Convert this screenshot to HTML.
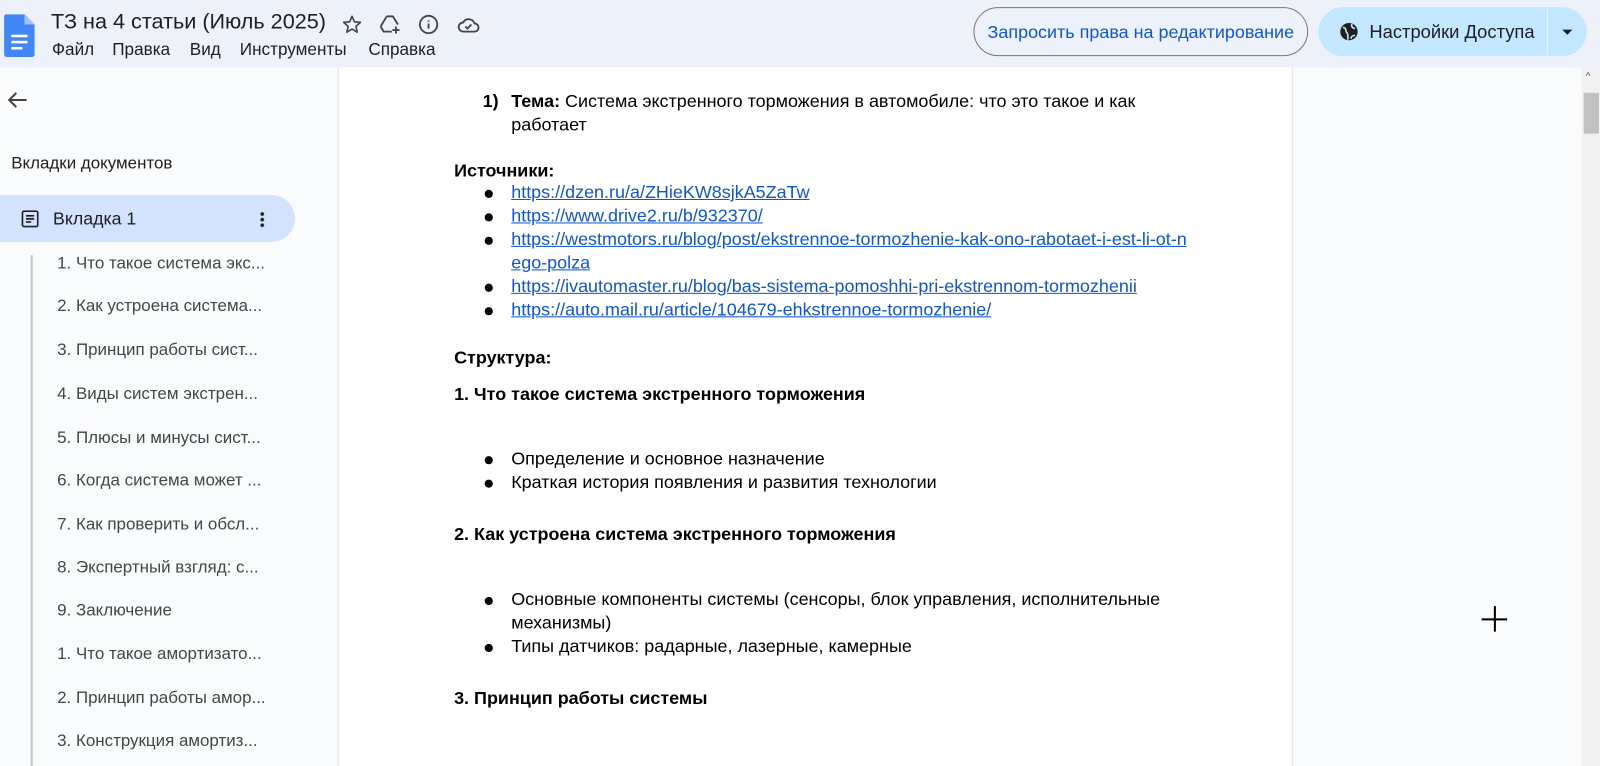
<!DOCTYPE html>
<html><head><meta charset="utf-8"><style>
*{margin:0;padding:0;box-sizing:border-box}
body{width:1600px;height:751px;overflow:hidden;background:#f9fbfd;font-family:"Liberation Sans",Arial,sans-serif;color:#000}
#w{position:absolute;left:0;top:0;width:1568px;height:736px;transform:scale(1.0204);transform-origin:0 0}
.a{position:absolute;white-space:nowrap}
#top{position:absolute;left:0;top:0;width:1568px;height:66px;background:#edf2fa}
.side{font-size:16.6px;color:#444746}
.doc{font-size:17.6px;line-height:23px}
.b{font-weight:bold}
.l{color:#1155cc;text-decoration:underline}
.dot{position:absolute;left:475px;width:8px;height:8px;border-radius:50%;background:#000}
.m{position:absolute;top:39px;font-size:16.8px;color:#1f1f1f}
</style></head><body><div id="w">
<div id="top"></div>
<svg class="a" style="left:4px;top:14px" width="30" height="42" viewBox="0 0 30 42"><path d="M2 0h18l10 10v29a3 3 0 0 1-3 3H3a3 3 0 0 1-3-3V3a3 3 0 0 1 2-3z" fill="#4285f4"/><path d="M20 0v10h10z" fill="#a1c2fa"/><rect x="7" y="20" width="16" height="2.5" fill="#fff"/><rect x="7" y="26" width="16" height="2.5" fill="#fff"/><rect x="7" y="32" width="11" height="2.5" fill="#fff"/></svg>
<div class="a" style="left:50px;top:10px;font-size:21.2px;color:#1f1f1f">ТЗ на 4 статьи (Июль 2025)</div>
<svg class="a" style="left:335px;top:14px" width="20" height="20" viewBox="0 0 20 20" fill="none" stroke="#444" stroke-width="1.6" stroke-linejoin="round"><path d="M10 2l2.4 5.4 5.8.5-4.4 3.9 1.3 5.7L10 14.5l-5.1 3 1.3-5.7L1.8 7.9l5.8-.5z"/></svg>
<svg class="a" style="left:372px;top:14px" width="22" height="20" viewBox="0 0 22 20" fill="none" stroke="#444" stroke-width="1.8" stroke-linejoin="round"><path d="M7 2h6l5 8M1 12L7 2M1 12l3 5h8"/><path d="M16 12v7M12.5 15.5h7"/></svg>
<svg class="a" style="left:410px;top:14px" width="20" height="20" viewBox="0 0 20 20" fill="none" stroke="#444" stroke-width="1.8"><circle cx="10" cy="10" r="8.5"/><path d="M10 9v5M10 6v1.2"/></svg>
<svg class="a" style="left:448px;top:16px" width="22" height="16" viewBox="0 0 22 16" fill="none" stroke="#444" stroke-width="1.8"><path d="M6 15h11a4 4 0 0 0 0-8 6 6 0 0 0-11-1 4.5 4.5 0 0 0 0 9z"/><path d="M8 10l2 2 4-4"/></svg>
<div class="m" style="left:51px">Файл</div>
<div class="m" style="left:110px">Правка</div>
<div class="m" style="left:186px">Вид</div>
<div class="m" style="left:235px">Инструменты</div>
<div class="m" style="left:361px">Справка</div>
<div class="a" style="left:954px;top:7px;width:328px;height:48px;border:1px solid #747775;border-radius:24px;color:#0b57d0;font-size:17.6px;text-align:center;line-height:46px">Запросить права на редактирование</div>
<div class="a" style="left:1292px;top:7px;width:263px;height:48px;background:#c2e7ff;border-radius:24px"></div>
<div class="a" style="left:1516px;top:8px;width:1px;height:46px;background:#edf2fa"></div>
<svg class="a" style="left:1313px;top:22px" width="18" height="18" viewBox="0 0 18 18"><circle cx="9" cy="9" r="8.5" fill="#1f1f1f"/><path d="M3 5c2 0 3 1 3 3s2 2 2 5v4M12 1.5c-1 2 0 4 3 4.5M11 16c0-2 1-3 4-3.5" stroke="#c2e7ff" stroke-width="1.6" fill="none"/></svg>
<div class="a" style="left:1342px;top:21px;font-size:18px;color:#1f1f1f">Настройки Доступа</div>
<div class="a" style="left:1531px;top:29px;width:0;height:0;border-left:5px solid transparent;border-right:5px solid transparent;border-top:5px solid #1f1f1f"></div>
<svg class="a" style="left:7px;top:89px" width="20" height="18" viewBox="0 0 20 18" fill="none" stroke="#444" stroke-width="2"><path d="M19 9H2M9 2L2 9l7 7"/></svg>
<div class="a" style="left:11px;top:150px;font-size:16.6px;color:#1f1f1f">Вкладки документов</div>
<div class="a" style="left:0;top:191px;width:289px;height:46px;background:#d3e3fd;border-radius:0 23px 23px 0"></div>
<svg class="a" style="left:21px;top:206px" width="17" height="17" viewBox="0 0 17 17" fill="none" stroke="#1f1f1f" stroke-width="1.6"><rect x="1" y="1" width="15" height="15" rx="1.5"/><path d="M4.5 5.5h8M4.5 8.5h8M4.5 11.5h5"/></svg>
<div class="a" style="left:52px;top:204px;font-size:17.4px;color:#1f1f1f">Вкладка 1</div>
<div class="a" style="left:255px;top:207px;width:4px;height:16px;background:radial-gradient(circle,#1f1f1f 1.6px,transparent 2px) 0 0/4px 5.5px"></div>
<div class="a" style="left:30px;top:250px;width:2px;height:501px;background:#c4c7c5"></div>
<div class="side">
<div class="a" style="left:56px;top:248px">1. Что такое система экс...</div>
<div class="a" style="left:56px;top:290px">2. Как устроена система...</div>
<div class="a" style="left:56px;top:333px">3. Принцип работы сист...</div>
<div class="a" style="left:56px;top:376px">4. Виды систем экстрен...</div>
<div class="a" style="left:56px;top:419px">5. Плюсы и минусы сист...</div>
<div class="a" style="left:56px;top:461px">6. Когда система может ...</div>
<div class="a" style="left:56px;top:504px">7. Как проверить и обсл...</div>
<div class="a" style="left:56px;top:546px">8. Экспертный взгляд: с...</div>
<div class="a" style="left:56px;top:588px">9. Заключение</div>
<div class="a" style="left:56px;top:631px">1. Что такое амортизато...</div>
<div class="a" style="left:56px;top:674px">2. Принцип работы амор...</div>
<div class="a" style="left:56px;top:716px">3. Конструкция амортиз...</div>
</div>
<div class="a" style="left:331px;top:66px;width:936px;height:685px;background:#fff;border-left:1px solid #e0e0e0;border-right:1px solid #e0e0e0"></div>
<div class="doc">
<div class="a" style="left:473px;top:88px"><b>1)</b></div>
<div class="a" style="left:501px;top:88px"><b>Тема:</b> Система экстренного торможения в автомобиле: что это такое и как</div>
<div class="a" style="left:501px;top:111px">работает</div>
<div class="a b" style="left:445px;top:156px">Источники:</div>
<div class="dot" style="top:186px"></div><div class="a l" style="left:501px;top:177px">https://dzen.ru/a/ZHieKW8sjkA5ZaTw</div>
<div class="dot" style="top:209px"></div><div class="a l" style="left:501px;top:200px">https://www.drive2.ru/b/932370/</div>
<div class="dot" style="top:232px"></div><div class="a l" style="left:501px;top:223px">https://westmotors.ru/blog/post/ekstrennoe-tormozhenie-kak-ono-rabotaet-i-est-li-ot-n</div>
<div class="a l" style="left:501px;top:246px">ego-polza</div>
<div class="dot" style="top:278px"></div><div class="a l" style="left:501px;top:269px">https://ivautomaster.ru/blog/bas-sistema-pomoshhi-pri-ekstrennom-tormozhenii</div>
<div class="dot" style="top:301px"></div><div class="a l" style="left:501px;top:292px">https://auto.mail.ru/article/104679-ehkstrennoe-tormozhenie/</div>
<div class="a b" style="left:445px;top:339px">Структура:</div>
<div class="a b" style="left:445px;top:375px">1. Что такое система экстренного торможения</div>
<div class="dot" style="top:447px"></div><div class="a" style="left:501px;top:438px">Определение и основное назначение</div>
<div class="dot" style="top:470px"></div><div class="a" style="left:501px;top:461px">Краткая история появления и развития технологии</div>
<div class="a b" style="left:445px;top:512px">2. Как устроена система экстренного торможения</div>
<div class="dot" style="top:585px"></div><div class="a" style="left:501px;top:576px">Основные компоненты системы (сенсоры, блок управления, исполнительные</div>
<div class="a" style="left:501px;top:599px">механизмы)</div>
<div class="dot" style="top:631px"></div><div class="a" style="left:501px;top:622px">Типы датчиков: радарные, лазерные, камерные</div>
<div class="a b" style="left:445px;top:673px">3. Принцип работы системы</div>
</div>
<div class="a" style="left:1452px;top:606px;width:25px;height:1.5px;background:#000"></div>
<div class="a" style="left:1464px;top:594px;width:1.5px;height:25px;background:#000"></div>
<div class="a" style="left:1550px;top:66px;width:18px;height:685px;background:#f1f1f1"></div>
<div class="a" style="left:1554px;top:70px;font-size:10px;color:#555">^</div>
<div class="a" style="left:1552px;top:91px;width:15px;height:40px;background:#c1c1c1"></div>
</div></body></html>
